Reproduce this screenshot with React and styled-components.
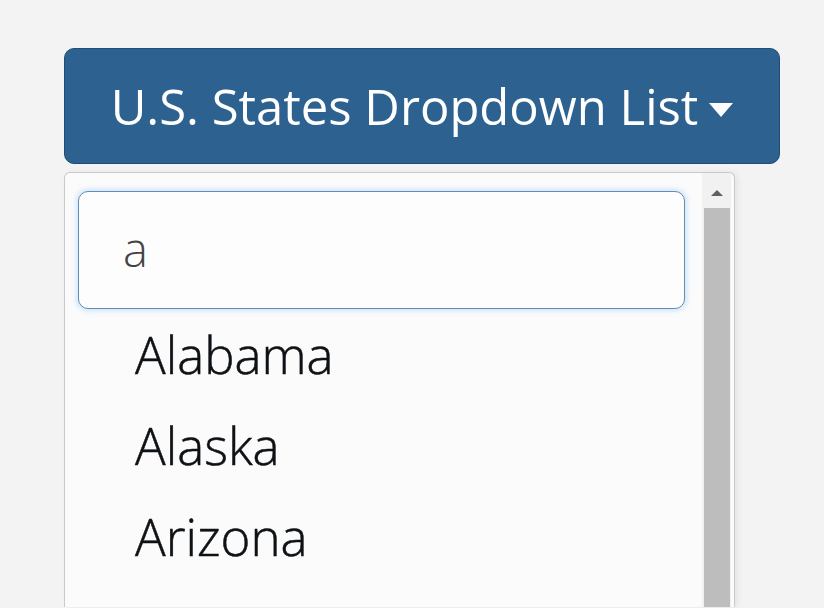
import React, {useState} from 'react';
import styled, {createGlobalStyle} from 'styled-components';

const GlobalStyle = createGlobalStyle`
  html, body {
    margin: 0;
    padding: 0;
    background: #f3f3f3;
    font-family: "Open Sans", "Noto Sans", sans-serif;
  }
`;

const Page = styled.div`
  width: 824px;
  height: 608px;
  overflow: hidden;
  box-sizing: border-box;
  padding: 48px 0 0 64px;
`;

const Toggle = styled.button`
  width: 716px;
  height: 116px;
  box-sizing: border-box;
  border: 1px solid #1f4d78;
  border-radius: 10px;
  background: #2c6190;
  color: #fff;
  font-family: "Open Sans", sans-serif;
  font-size: 49px;
  font-weight: 400;
  display: flex;
  align-items: center;
  justify-content: center;
  gap: 11px;
  padding: 0;
  cursor: pointer;
`;

const Caret = styled.span`
  display: inline-block;
  width: 0;
  height: 0;
  border-left: 12px solid transparent;
  border-right: 12px solid transparent;
  border-top: 14px solid #fff;
  margin-top: 8px;
`;

const Menu = styled.div`
  margin-top: 8px;
  width: 671px;
  height: 435px;
  box-sizing: border-box;
  border: 1px solid #c9c9c9;
  border-bottom: none;
  border-radius: 6px 6px 0 0;
  background: #fbfbfc;
  display: flex;
  box-shadow: 3px 0 6px rgba(0, 0, 0, 0.06);
`;

const Content = styled.div`
  flex: 1;
  padding: 18px 0 0 13px;
`;

const Search = styled.input`
  width: 607px;
  height: 118px;
  box-sizing: border-box;
  border: 1px solid #5f8fb8;
  border-radius: 10px;
  background: #fdfdfd;
  box-shadow: 0 0 5px 2px rgba(130, 190, 235, 0.35);
  font-family: "Open Sans", sans-serif;
  font-size: 47px;
  font-weight: 300;
  color: #444;
  padding: 0 0 2px 44px;
  outline: none;
  caret-color: #333;
`;

const List = styled.ul`
  list-style: none;
  margin: 0;
  padding: 0;
`;

const Item = styled.li`
  font-size: 51px;
  font-weight: 300;
  line-height: 91px;
  color: #0f1215;
  padding-left: 57px;
  -webkit-text-stroke: 0.5px #0f1215;
`;

const Scrollbar = styled.div`
  width: 29px;
  display: flex;
  flex-direction: column;
  align-items: center;
  margin-right: 3px;
  background: #f1f1f1;
`;

const ArrowUp = styled.span`
  width: 0;
  height: 0;
  border-left: 6px solid transparent;
  border-right: 6px solid transparent;
  border-bottom: 6px solid #606060;
  margin: 17px 0 12px;
`;

const Thumb = styled.div`
  width: 26px;
  flex: 1;
  background: #bdbdbd;
`;

const states = ['Alabama', 'Alaska', 'Arizona'];

export default function App() {
  const [query, setQuery] = useState('a');
  const shown = states.filter(s => s.toLowerCase().includes(query.toLowerCase()));

  return (
    <Page>
      <GlobalStyle />
      <Toggle>
        U.S. States Dropdown List
        <Caret />
      </Toggle>
      <Menu>
        <Content>
          <Search autoFocus value={query} onChange={e => setQuery(e.target.value)} />
          <List>
            {shown.map(s => <Item key={s}>{s}</Item>)}
          </List>
        </Content>
        <Scrollbar>
          <ArrowUp />
          <Thumb />
        </Scrollbar>
      </Menu>
    </Page>
  );
}
